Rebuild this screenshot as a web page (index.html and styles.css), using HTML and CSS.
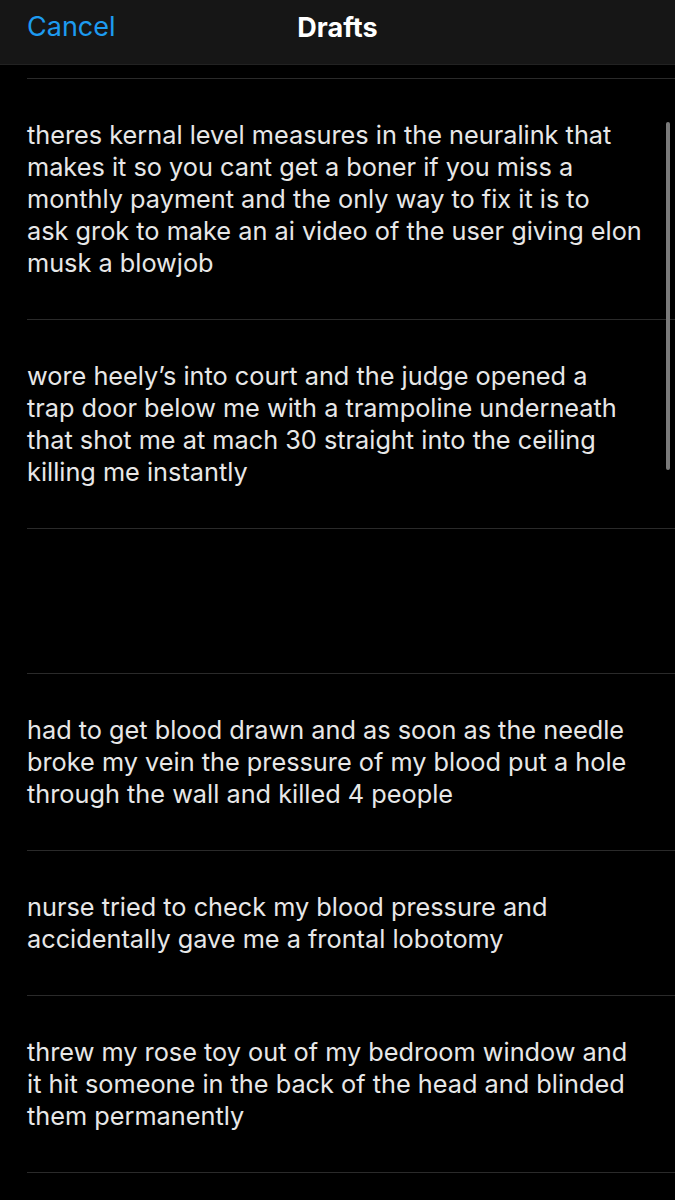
FILE: index.html
```html
<!DOCTYPE html>
<html>
<head>
	<title>Drafts</title>
	<link rel="stylesheet" href="styles.css">
</head>
<body>
	<div class="header">
		<span class="cancel">Cancel</span>
		<span class="title">Drafts</span>
	</div>
	<div class="drafts">
		<div class="draft">theres kernal level measures in the neuralink that<br>makes it so you cant get a boner if you miss a<br>monthly payment and the only way to fix it is to<br>ask grok to make an ai video of the user giving elon<br>musk a blowjob</div>
		<div class="draft">wore heely’s into court and the judge opened a<br>trap door below me with a trampoline underneath<br>that shot me at mach 30 straight into the ceiling<br>killing me instantly</div>
		<div class="draft blank">&nbsp;<br>&nbsp;</div>
		<div class="draft">had to get blood drawn and as soon as the needle<br>broke my vein the pressure of my blood put a hole<br>through the wall and killed 4 people</div>
		<div class="draft">nurse tried to check my blood pressure and<br>accidentally gave me a frontal lobotomy</div>
		<div class="draft">threw my rose toy out of my bedroom window and<br>it hit someone in the back of the head and blinded<br>them permanently</div>
	</div>
	<div class="scrollbar"></div>
</body>
</html>
```

FILE: styles.css
```css
body {
	margin: 0;
	background-color: #000;
	font-family: Inter, "Noto Sans", sans-serif;
	color: #e7e7e7;
}

.header {
	height: 65px;
	background-color: #161616;
	border-bottom: 1px solid #222;
	display: flex;
	align-items: center;
	justify-content: center;
	position: relative;
	box-sizing: border-box;
}

.header .cancel {
	position: absolute;
	left: 27px;
	top: 10px;
	font-size: 27px;
	color: #1d9bf0;
}

.header .title {
	font-size: 27px;
	font-weight: 700;
	color: #fff;
	margin-top: -10px;
}

.drafts {
	margin: 13px 0 0 27px;
	border-top: 1px solid #2a2a2a;
}

.draft {
	padding: 40px 0;
	font-size: 25.3px;
	line-height: 32px;
	border-bottom: 1px solid #2a2a2a;
	white-space: nowrap;
}

.scrollbar {
	position: absolute;
	left: 666px;
	top: 122px;
	width: 4px;
	height: 348px;
	border-radius: 2px;
	background-color: #7a7a7a;
}
```
